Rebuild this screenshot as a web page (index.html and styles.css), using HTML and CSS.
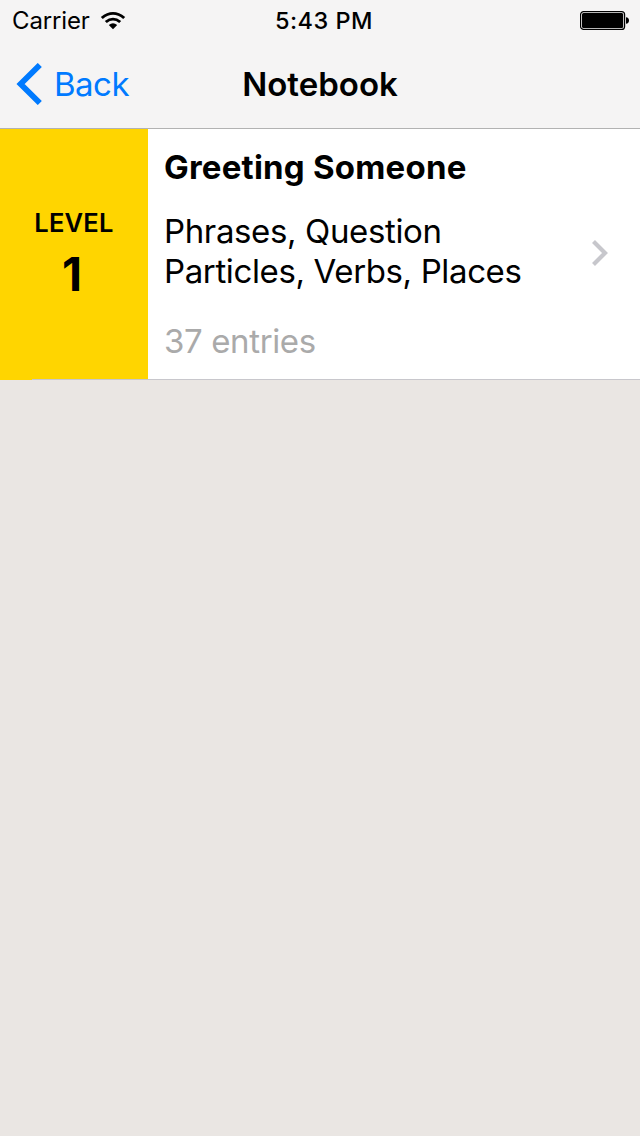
FILE: index.html
```html
<!DOCTYPE html>
<html lang="en">
<head>
<meta charset="utf-8">
<title>Notebook</title>
<link rel="stylesheet" href="styles.css">
</head>
<body>
<header class="header">
  <div class="status">
    <div class="status-left"><span class="carrier">Carrier</span>
      <svg class="wifi" width="26" height="20" viewBox="0 0 26 20"><path d="M.8 5.9Q13-4.1 25.2 5.9L23.2 8Q13-.3 2.8 8ZM4.8 10Q13 3.3 21.2 10L19.2 12Q13 7.1 6.8 12ZM8.8 14Q13 10.6 17.2 14L13 18.2Z"/></svg>
    </div>
    <span class="time">5:43 PM</span>
    <svg class="battery" width="50" height="20" viewBox="0 0 50 20"><rect x=".6" y=".6" width="44" height="17.8" rx="3" fill="none" stroke="#000" stroke-width="1.2"/><rect x="2" y="2" width="41.2" height="15" rx="1.5"/><path d="M46 6.2Q49 6.5 49 9.5T46 12.8Z"/></svg>
  </div>
  <nav class="nav">
    <a class="back"><svg width="26" height="42" viewBox="0 0 26 42"><path d="M23.8 2L4.6 21L23.8 40" fill="none" stroke="#007aff" stroke-width="5.8"/></svg><span class="back-label">Back</span></a>
    <h1 class="title">Notebook</h1>
  </nav>
</header>
<main class="list">
  <article class="row">
    <div class="level"><span class="level-label">LEVEL</span><span class="level-number">1</span></div>
    <div class="details">
      <h2 class="lesson">Greeting Someone</h2>
      <p class="topics"><span class="line">Phrases, Question</span><span class="line">Particles, Verbs, Places</span></p>
      <p class="entries">37 entries</p>
    </div>
    <svg class="chevron" width="18" height="28" viewBox="0 0 18 28"><path d="M2.5 2.5L14 14L2.5 25.5" fill="none" stroke="#c7c7cc" stroke-width="4.2"/></svg>
  </article>
</main>
</body>
</html>
```
FILE: styles.css
```css
* { box-sizing: border-box; }
body { margin: 0; height: 1136px; overflow: hidden; background: #eae6e3; color: #000; font-family: Inter, sans-serif; }
h1, h2, p { margin: 0; }
span, h1, h2, p { white-space: nowrap; }
.header { height: 129px; background: #f5f4f4; border-bottom: 1px solid #b2b2b2; }
.status { height: 40px; display: grid; grid-template-columns: 1fr auto 1fr; align-items: center; padding: 1px 10px 0 12px; font-size: 24px; }
.status-left { display: flex; align-items: center; gap: 10px; letter-spacing: -.15px; }
.time { font-weight: 500; font-size: 23.5px; letter-spacing: .5px; padding-left: 6px; }
.battery { justify-self: end; }
.nav { height: 88px; display: grid; grid-template-columns: 1fr auto 1fr; align-items: center; padding: 0 16px; font-size: 33px; }
.back { display: flex; align-items: center; gap: 12px; color: #007aff; letter-spacing: -.5px; }
.title { font-size: 33px; font-weight: 600; }
.row { position: relative; height: 251px; display: flex; background: #fff; }
.row::after { content: ""; position: absolute; left: 32px; right: 0; bottom: 0; height: 1px; background: #c8c7cc; }
.level { width: 148px; background: #ffd500; display: flex; flex-direction: column; align-items: center; padding-top: 78px; font-weight: 600; }
.level-label { font-size: 25.5px; line-height: 32px; letter-spacing: .2px; }
.level-number { font-size: 46.5px; line-height: 70px; padding-right: 4px; font-weight: 700; }
.details { flex: 1; padding: 18px 0 0 16px; font-size: 33px; line-height: 40px; letter-spacing: -.37px; }
.lesson { font-size: 33px; line-height: 40px; font-weight: 700; letter-spacing: .22px; }
.topics { margin-top: 24px; }
.line { display: block; }
.entries { margin-top: 30px; color: #aaa; }
.chevron { margin: 110px 31px 0 0; }
```
